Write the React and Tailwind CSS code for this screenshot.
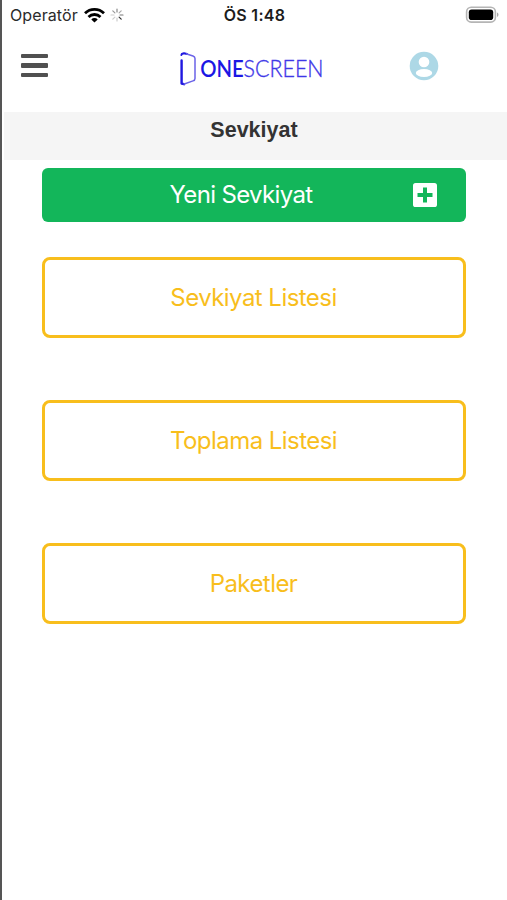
import React from 'react';

function StatusBar() {
  return (
    <div className="flex h-[30px] items-center justify-between pl-2 pr-[8px]">
      <div className="flex w-[180px] items-center">
        <span className="w-[69px] whitespace-nowrap text-[16px] leading-none tracking-[0.1px] text-[#2b2b2b]">Operatör</span>
        <svg className="ml-[5px] h-[15px] w-[21px]" viewBox="0 0 21 15" fill="none" stroke="#000" strokeWidth="2.8">
          <path d="M1 5.3a13.6 13.6 0 0 1 19 0" />
          <path d="M4.5 8.9a8.7 8.7 0 0 1 12 0" />
          <path d="M10.5 14.6 7.3 11.4a4.6 4.6 0 0 1 6.4 0Z" fill="#000" stroke="none" />
        </svg>
        <svg className="ml-[5px] h-[14px] w-[14px]" viewBox="-7 -7 14 14" strokeWidth="1.2" strokeLinecap="round">
          <path d="M0-3V-6" stroke="#888" />
          <path d="M2.1-2.1 4.2-4.2" stroke="#aaa" />
          <path d="M3 0H6" stroke="#777" />
          <path d="M2.1 2.1 4.2 4.2" stroke="#333" />
          <path d="M0 3V6" stroke="#ccc" />
          <path d="M-2.1 2.1-4.2 4.2" stroke="#ccc" />
          <path d="M-3 0H-6" stroke="#ccc" />
          <path d="M-2.1-2.1-4.2-4.2" stroke="#999" />
        </svg>
      </div>
      <span className="whitespace-nowrap text-[16px] font-semibold leading-none tracking-[0.3px] text-[#1c1c1c]">ÖS 1:48</span>
      <div className="flex w-[180px] justify-end">
        <svg className="h-[18px] w-[34px]" viewBox="0 0 34 18">
          <rect x="1.6" y="1.3" width="28.8" height="14.8" rx="4.6" fill="#fff" stroke="#b5b5b5" strokeWidth="1.6" />
          <rect x="3.8" y="3.4" width="24.4" height="10.6" rx="2.8" fill="#000" />
          <path d="M32 6.5q1.5.6 1.5 2.2T32 10.9Z" fill="#aaa" />
        </svg>
      </div>
    </div>
  );
}

function Logo() {
  return (
    <svg className="h-[36px] w-[150px]" viewBox="0 0 150 36" fill="none">
      <path d="M2.6 9.5V32.6L5 33.2" stroke="#2018e0" strokeWidth="2.4" strokeLinecap="round" strokeLinejoin="round" />
      <path d="M2.4 4 2.8 3 5 2.2 8 3" stroke="#2018e0" strokeWidth="2" strokeLinecap="round" strokeLinejoin="round" />
      <path d="M7 2.8 14 5Q16 5.6 16 7.6V27.4Q16 29.3 14 29.9L4.6 33.2" stroke="#6b63e8" strokeWidth="1.5" />
      <text x="21.3" y="26" fill="#1c16e4" fontFamily="Lato, sans-serif" fontSize="22.5" fontWeight="600" textLength="43.5" lengthAdjust="spacingAndGlyphs">ONE</text>
      <text x="64.5" y="26" fill="#3f38e8" stroke="#3f38e8" strokeWidth="0.35" fontFamily="Lato, sans-serif" fontSize="22.5" fontWeight="300" textLength="80" lengthAdjust="spacingAndGlyphs">SCREEN</text>
    </svg>
  );
}

function Header() {
  return (
    <header className="flex h-[82px] items-start pl-[19px]">
      <button className="mt-[24px] flex w-[27px] flex-col gap-[5px]" aria-label="Menu">
        <span className="h-[4.3px] w-full rounded-[1px] bg-[#505050]" />
        <span className="h-[4.3px] w-full rounded-[1px] bg-[#505050]" />
        <span className="h-[4.3px] w-full rounded-[1px] bg-[#505050]" />
      </button>
      <div className="ml-[131px] mt-[21px]"><Logo /></div>
      <svg className="ml-[80px] mt-[21px] h-[30px] w-[30px]" viewBox="0 0 30 30">
        <circle cx="15" cy="15" r="14.3" fill="#add8e6" />
        <circle cx="15" cy="11" r="5.3" fill="#fff" />
        <ellipse cx="15" cy="22" rx="8.2" ry="4" fill="#fff" />
      </svg>
    </header>
  );
}

function ListButton({ label }) {
  return (
    <button className="flex h-[81px] w-full items-center justify-center rounded-[8px] border-3 border-[#f8be1c] pr-[1px] text-[24px] leading-none text-[#f8be1c]">
      <span className="tracking-[-0.55px]">{label}</span>
    </button>
  );
}

export default function App() {
  return (
    <div className="h-[900px] w-[507px] overflow-hidden border-l-2 border-[#555] bg-white font-['Inter',sans-serif]">
      <StatusBar />
      <Header />
      <div className="ml-[2px] flex h-[48px] justify-center bg-[#f5f5f5] pr-[3px] pt-[6px]">
        <h1 className="font-['Liberation_Sans',sans-serif] text-[21.5px] font-bold leading-[25px] text-[#333]">Sevkiyat</h1>
      </div>
      <main className="ml-[40px] mt-[8px] w-[424px]">
        <button className="flex h-[54px] w-full items-center justify-between rounded-[6px] bg-[#13b65a] pl-[127.5px] pr-[29px] text-white">
          <span className="whitespace-nowrap text-[24px] leading-none tracking-[-0.65px]">Yeni Sevkiyat</span>
          <svg className="h-[24px] w-[24px]" viewBox="0 0 24 24">
            <rect width="24" height="24" rx="2.6" fill="#fff" />
            <path d="M12 4.5V19.5M4.5 12H19.5" stroke="#13b65a" strokeWidth="4" />
          </svg>
        </button>
        <div className="mt-[35px] flex flex-col gap-[62px]">
          <ListButton label="Sevkiyat Listesi" />
          <ListButton label="Toplama Listesi" />
          <ListButton label="Paketler" />
        </div>
      </main>
    </div>
  );
}
